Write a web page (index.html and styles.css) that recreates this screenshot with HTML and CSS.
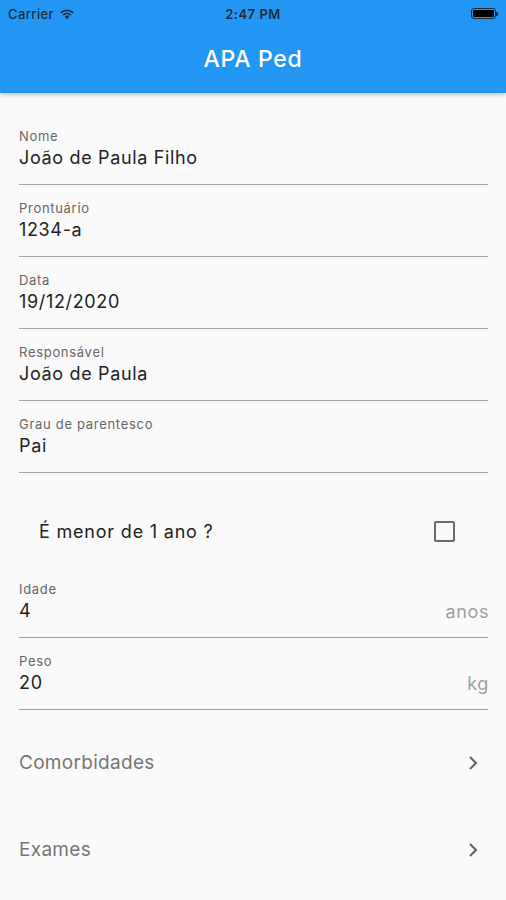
FILE: index.html
```html
<!DOCTYPE html>
<html lang="pt">
<head>
<meta charset="utf-8">
<title>APA Ped</title>
<link rel="stylesheet" href="styles.css">
</head>
<body>
<header class="appbar">
  <div class="status">
    <div class="status-left">
      <span class="carrier">Carrier</span>
      <svg class="wifi" width="16" height="12" viewBox="0 0 16 12">
        <path d="M8 11.2 L5.6 8.6 A3.6 3.6 0 0 1 10.4 8.6 Z" fill="#1c2b3a"/>
        <path d="M3.6 6.6 A6.4 6.4 0 0 1 12.4 6.6 L11.2 7.8 A4.7 4.7 0 0 0 4.8 7.8 Z" fill="#1c2b3a"/>
        <path d="M1.2 4.2 A9.8 9.8 0 0 1 14.8 4.2 L13.6 5.4 A8.1 8.1 0 0 0 2.4 5.4 Z" fill="#1c2b3a"/>
      </svg>
    </div>
    <span class="time">2:47 PM</span>
    <div class="battery"><span class="battery-fill"></span><span class="battery-nub"></span></div>
  </div>
  <div class="toolbar"><h1 class="title">APA Ped</h1></div>
</header>
<main class="content">
  <div class="field">
    <span class="label">Nome</span>
    <div class="value-row"><span class="value">João de Paula Filho</span></div>
  </div>
  <div class="field">
    <span class="label">Prontuário</span>
    <div class="value-row"><span class="value">1234-a</span></div>
  </div>
  <div class="field">
    <span class="label">Data</span>
    <div class="value-row"><span class="value">19/12/2020</span></div>
  </div>
  <div class="field">
    <span class="label">Responsável</span>
    <div class="value-row"><span class="value">João de Paula</span></div>
  </div>
  <div class="field">
    <span class="label">Grau de parentesco</span>
    <div class="value-row"><span class="value">Pai</span></div>
  </div>
  <div class="check-row">
    <span class="check-text">É menor de 1 ano ?</span>
    <span class="checkbox"></span>
  </div>
  <div class="field">
    <span class="label">Idade</span>
    <div class="value-row"><span class="value">4</span><span class="suffix">anos</span></div>
  </div>
  <div class="field">
    <span class="label">Peso</span>
    <div class="value-row"><span class="value">20</span><span class="suffix">kg</span></div>
  </div>
  <div class="tiles">
    <div class="tile">
      <span class="tile-text">Comorbidades</span>
      <svg class="chevron" width="10" height="16" viewBox="0 0 10 16"><path d="M2 2 L8 8 L2 14" fill="none" stroke="#616161" stroke-width="2"/></svg>
    </div>
    <div class="tile">
      <span class="tile-text">Exames</span>
      <svg class="chevron" width="10" height="16" viewBox="0 0 10 16"><path d="M2 2 L8 8 L2 14" fill="none" stroke="#616161" stroke-width="2"/></svg>
    </div>
  </div>
</main>
</body>
</html>
```
FILE: styles.css
```css
* { box-sizing: border-box; }
html, body { margin: 0; padding: 0; }
body {
  width: 506px;
  height: 900px;
  overflow: hidden;
  background: #fafafa;
  font-family: Inter, Roboto, "Noto Sans", sans-serif;
  color: #212121;
}
.appbar {
  background: #2196f3;
  height: 93px;
  box-shadow: 0 2px 4px rgba(0,0,0,0.22);
  position: relative;
  z-index: 1;
}
.status {
  height: 27px;
  display: flex;
  align-items: center;
  justify-content: space-between;
  padding: 0 8px 0 8px;
  position: relative;
}
.status-left { display: flex; align-items: center; gap: 5px; }
.carrier { font-size: 13px; font-weight: 500; color: #1c2b3a; letter-spacing: 0.4px; }
.time {
  position: absolute;
  left: 0; right: 0;
  text-align: center;
  font-size: 13px;
  font-weight: 600;
  color: #1c2b3a;
  letter-spacing: 0.5px;
}
.battery {
  width: 25px; height: 11px;
  border: 1px solid #1c2b3a;
  border-radius: 3px;
  padding: 1px;
  position: relative;
  margin-right: 2px;
}
.battery-fill { display: block; width: 100%; height: 100%; background: #000; border-radius: 1px; }
.battery-nub {
  position: absolute; right: -3px; top: 3px;
  width: 2px; height: 4px; background: #1c2b3a; border-radius: 0 1px 1px 0;
}
.toolbar {
  height: 66px;
  display: flex;
  align-items: center;
  justify-content: center;
}
.title {
  margin: 0;
  font-size: 23px;
  font-weight: 500;
  color: #fff;
  letter-spacing: 0.7px;
  padding-bottom: 2px;
}
.content { padding: 20px 18px 0 19px; }
.field {
  padding: 15px 0 14px;
  border-bottom: 1px solid #a3a3a3;
  display: flex;
  flex-direction: column;
  gap: 2px;
}
.label { font-size: 13px; line-height: 16px; color: #666; letter-spacing: 0.7px; }
.value-row { display: flex; justify-content: space-between; align-items: center; height: 24px; }
.value { font-size: 18px; line-height: 24px; color: #222; letter-spacing: 0.65px; }
.suffix { font-size: 18px; color: #9e9e9e; letter-spacing: 0.6px; margin-right: -1px; }
.check-row {
  margin: 30px 0 7px;
  height: 56px;
  display: flex;
  align-items: center;
  justify-content: space-between;
  padding: 0 33px 0 20px;
}
.check-text { font-size: 18px; color: #222; letter-spacing: 0.8px; }
.checkbox {
  width: 21px; height: 21px;
  border: 2px solid #6b6b6b;
  border-radius: 2px;
}
.tiles { margin-top: 9px; }
.tile {
  height: 87px;
  display: flex;
  align-items: center;
  justify-content: space-between;
  padding-right: 10px;
}
.tile-text { font-size: 19px; color: #757575; letter-spacing: 0.3px; }
.chevron { display: block; }
```
